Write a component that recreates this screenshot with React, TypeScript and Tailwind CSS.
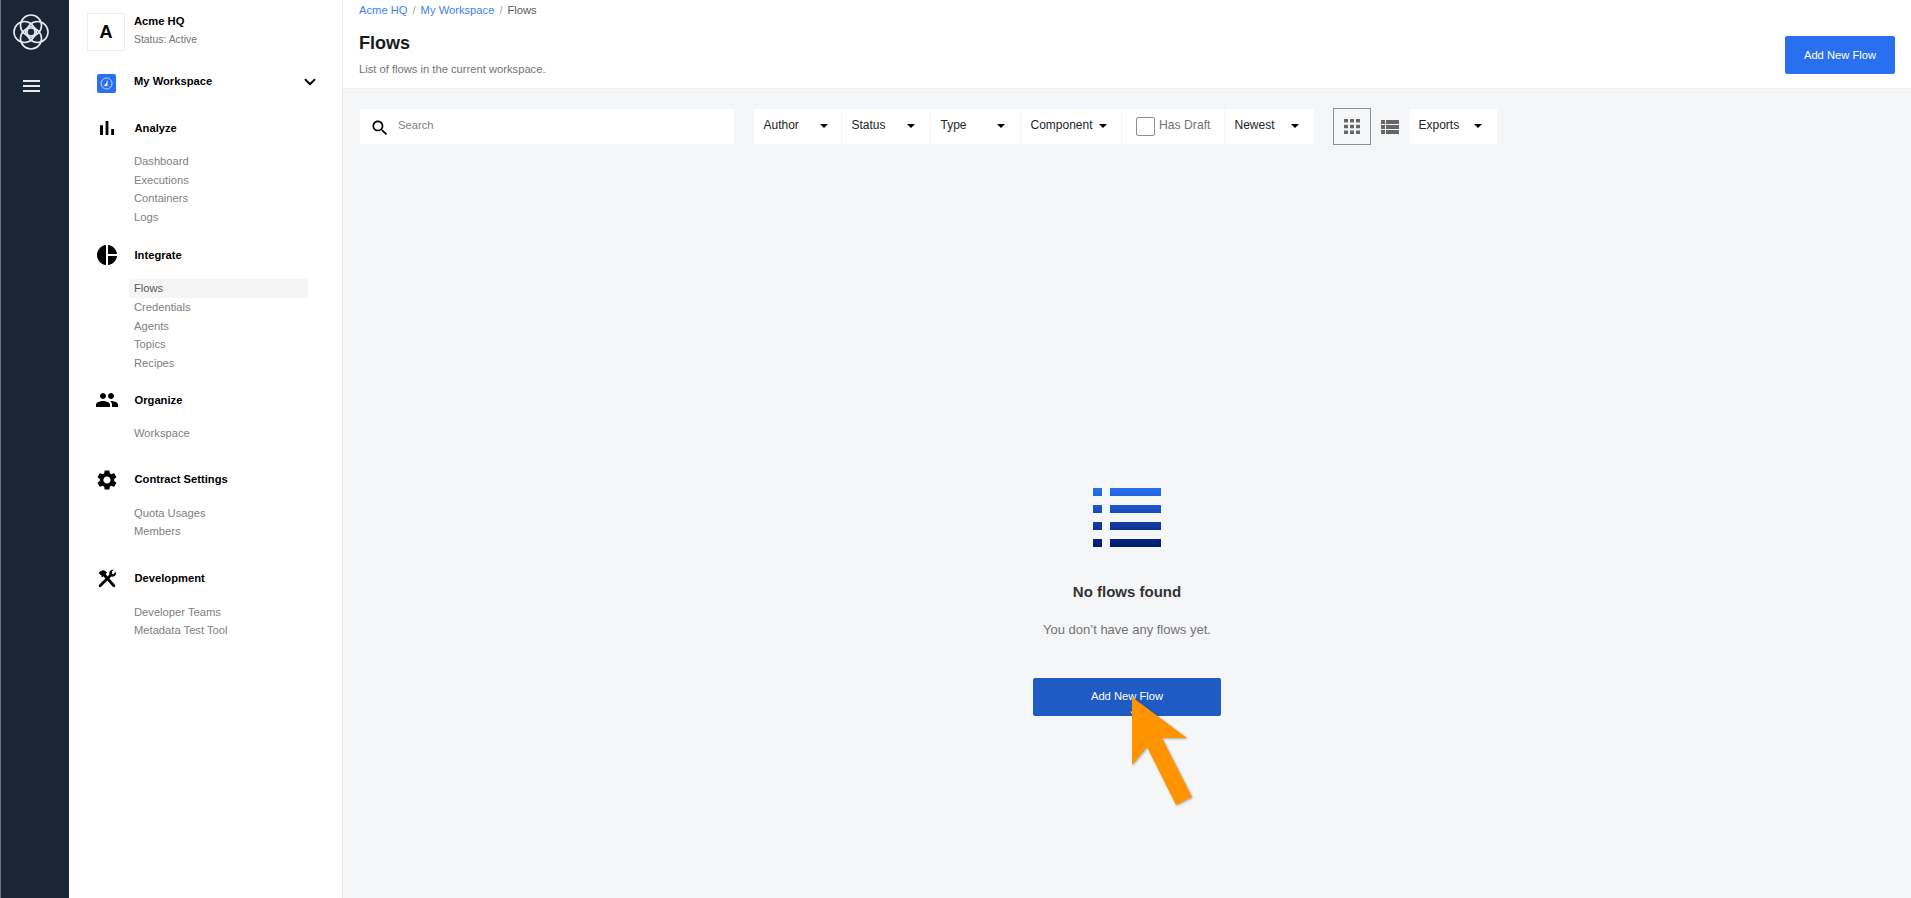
import { ChevronDown } from 'lucide-react';

const navGroups = [
    { title: "Analyze", icon: "analyze", items: ["Dashboard", "Executions", "Containers", "Logs"], mt: "mt-[28px]" },
    { title: "Integrate", icon: "integrate", items: ["Flows", "Credentials", "Agents", "Topics", "Recipes"], mt: "mt-[21.6px]" },
    { title: "Organize", icon: "organize", items: ["Workspace"], mt: "mt-[20.6px]" },
    { title: "Contract Settings", icon: "settings", items: ["Quota Usages", "Members"], mt: "mt-[29.6px]" },
    { title: "Development", icon: "tools", items: ["Developer Teams", "Metadata Test Tool"], mt: "mt-[30.6px]" },
];

function NavIcon({ name }: { name: string }) {
    if (name === "analyze") {
        return (
            <svg className="w-6 h-6" viewBox="0 0 24 24" fill="#000">
                <path d="M5 9.2h3V19H5zM10.6 5h2.8v14h-2.8zM16.2 13H19v6h-2.8z" />
            </svg>
        );
    }
    if (name === "integrate") {
        return (
            <svg className="w-6 h-6" viewBox="0 0 24 24" fill="#000">
                <path d="M11 2v20c-5.07-.5-9-4.79-9-10s3.93-9.5 9-10zm2.03 0v8.99H22c-.47-4.74-4.24-8.52-8.97-8.99zm0 11.01V22c4.74-.47 8.5-4.25 8.97-8.99h-8.97z" />
            </svg>
        );
    }
    if (name === "organize") {
        return (
            <svg className="w-6 h-6" viewBox="0 0 24 24" fill="#000">
                <path d="M16 11c1.66 0 2.99-1.34 2.99-3S17.66 5 16 5c-1.66 0-3 1.34-3 3s1.34 3 3 3zm-8 0c1.66 0 2.99-1.34 2.99-3S9.66 5 8 5C6.34 5 5 6.34 5 8s1.34 3 3 3zm0 2c-2.33 0-7 1.17-7 3.5V19h14v-2.5c0-2.33-4.67-3.5-7-3.5zm8 0c-.29 0-.62.02-.97.05 1.16.84 1.97 1.97 1.97 3.45V19h6v-2.5c0-2.33-4.67-3.5-7-3.5z" />
            </svg>
        );
    }
    if (name === "settings") {
        return (
            <svg className="w-6 h-6" viewBox="0 0 24 24" fill="#000">
                <path d="M19.14 12.94c.04-.3.06-.61.06-.94 0-.32-.02-.64-.07-.94l2.03-1.58c.18-.14.23-.41.12-.61l-1.92-3.32c-.12-.22-.37-.29-.59-.22l-2.39.96c-.5-.38-1.03-.7-1.62-.94l-.36-2.54c-.04-.24-.24-.41-.48-.41h-3.84c-.24 0-.43.17-.47.41l-.36 2.54c-.59.24-1.13.57-1.62.94l-2.39-.96c-.22-.08-.47 0-.59.22L2.74 8.87c-.12.21-.08.47.12.61l2.03 1.58c-.05.3-.09.63-.09.94s.02.64.07.94l-2.03 1.58c-.18.14-.23.41-.12.61l1.92 3.32c.12.22.37.29.59.22l2.39-.96c.5.38 1.03.7 1.62.94l.36 2.54c.05.24.24.41.48.41h3.84c.24 0 .44-.17.47-.41l.36-2.54c.59-.24 1.13-.56 1.62-.94l2.39.96c.22.08.47 0 .59-.22l1.92-3.32c.12-.22.07-.47-.12-.61l-2.01-1.58zM12 15.6c-1.98 0-3.6-1.62-3.6-3.6s1.62-3.6 3.6-3.6 3.6 1.62 3.6 3.6-1.62 3.6-3.6 3.6z" />
            </svg>
        );
    }
    return (
        <svg className="w-[22px] h-[22px]" viewBox="0 0 24 24" fill="#000">
            <path d="M3.2 4.6 L7 2.5 C9 2.3 10.8 3.4 12 5 L10.4 6.6 L20.6 18.4 C21.2 19.1 21.1 19.9 20.5 20.5 C19.9 21.1 19 21.1 18.4 20.5 L8 9 L6.4 10.4 L5.8 7.9 L4 7.2 Z" />
            <path d="M21.6 4.2 L19 6.8 L17.3 5.9 L17.5 3.6 L19.6 2 C17.4 1.3 15 2.6 14.5 4.8 C14.3 5.6 14.4 6.4 14.7 7.1 L3.4 18.3 C2.8 18.9 2.8 19.9 3.4 20.5 C4 21.1 5 21.1 5.6 20.5 L16.7 9.3 C17.5 9.6 18.4 9.6 19.2 9.4 C21.4 8.8 22.5 6.4 21.6 4.2 Z" />
        </svg>
    );
}

function Caret() {
    return <span className="w-0 h-0 mt-[2px] border-x-[4px] border-x-transparent border-t-[4px] border-t-black" />;
}

function FilterButton({ label, className }: { label: string; className: string }) {
    return (
        <div className={`h-[35px] bg-white flex items-center justify-between pl-[9.5px] pb-[3px] text-[12px] text-[#212529] ${className}`}>
            <span>{label}</span>
            <Caret />
        </div>
    );
}

function Logo() {
    return (
        <svg className="w-[36px] h-[36px]" viewBox="0 0 36 36" fill="none" stroke="#e6e9ee" strokeWidth="1.6">
            <circle cx="18" cy="18" r="5.5" />
            <circle cx="18" cy="11.5" r="10.5" />
            <circle cx="18" cy="24.5" r="10.5" />
            <circle cx="11.5" cy="18" r="10.5" />
            <circle cx="24.5" cy="18" r="10.5" />
        </svg>
    );
}

export default function App() {
    return (
        <div className="flex h-[898px] w-full overflow-hidden bg-white font-['Liberation_Sans',Arial,sans-serif]">
            {/* Dark rail */}
            <div className="w-[69px] shrink-0 bg-[#1a2535] border-l border-l-[#6b7280] flex flex-col items-center pt-[14px] pr-[8px]">
                <Logo />
                <div className="mt-[30px] w-[17px] flex flex-col gap-[3px]">
                    <span className="h-[2px] bg-[#e6e9ee]" />
                    <span className="h-[2px] bg-[#e6e9ee]" />
                    <span className="h-[2px] bg-[#e6e9ee]" />
                </div>
            </div>

            {/* Sidebar */}
            <aside className="w-[274px] shrink-0 bg-white border-r border-r-[#e9ebee] pl-[18px] pt-[13px]">
                <div className="flex">
                    <div className="w-[38px] h-[38px] border border-[#eceef0] flex items-center justify-center text-[18px] font-bold text-black">A</div>
                    <div className="ml-[9px] pt-[1px]">
                        <div className="text-[11.2px] leading-[14px] font-bold text-black">Acme HQ</div>
                        <div className="mt-[5px] text-[10.4px] leading-[14px] text-[#737373]">Status: Active</div>
                    </div>
                </div>

                <div className="mt-[23px] flex items-start">
                    <div className="ml-[10px] w-[19px] h-[19px] rounded-[2px] bg-[#2970f0] flex items-center justify-center">
                        <svg className="w-[13px] h-[13px]" viewBox="0 0 13 13" fill="none">
                            <circle cx="6.5" cy="6.5" r="5.5" stroke="#c9dbfb" strokeWidth="1" />
                            <path fill="#fff" d="M7.5 3 V8.5 A2.5 2.5 0 0 1 3.5 8 C4.5 8 5.5 7.5 6 6.5 C6.5 5.5 6.8 4 7.5 3 Z" />
                        </svg>
                    </div>
                    <div className="ml-[18px] w-[167px] text-[11.2px] leading-[14px] font-bold text-black">My Workspace</div>
                    <ChevronDown className="w-[18px] h-[18px] mt-[-1px] text-black" strokeWidth={2.5} />
                </div>

                <nav>
                    {navGroups.map((group) => (
                        <div key={group.title} className={group.mt}>
                            <div className="flex items-center h-[14px]">
                                <div className="w-[39px] flex justify-center">
                                    <NavIcon name={group.icon} />
                                </div>
                                <span className="ml-[8.5px] text-[11.2px] font-bold text-black">{group.title}</span>
                            </div>
                            <ul className="mt-[17px] ml-[42px] w-[179px]">
                                {group.items.map((item) => (
                                    <li
                                        key={item}
                                        className={`h-[18.7px] pl-[5px] flex items-center text-[11.2px] ${item === "Flows" ? "bg-[#f5f5f5] text-[#595959]" : "text-[#808080]"}`}
                                    >
                                        {item}
                                    </li>
                                ))}
                            </ul>
                        </div>
                    ))}
                </nav>
            </aside>

            {/* Main */}
            <main className="relative flex-1 flex flex-col bg-[#f5f6f8]">
                <header className="h-[89px] shrink-0 bg-white border-b border-b-[#eceef0] pl-[17px] pr-[16px] flex justify-between">
                    <div className="-ml-[1px]">
                        <div className="pt-[3px] flex gap-[5px] text-[11.2px] leading-[14px]">
                            <span className="text-[#3f7ff0]">Acme HQ</span>
                            <span className="text-[#a0a4a8]">/</span>
                            <span className="text-[#3f7ff0]">My Workspace</span>
                            <span className="text-[#a0a4a8]">/</span>
                            <span className="text-[#595959]">Flows</span>
                        </div>
                        <h1 className="mt-[14px] text-[18px] leading-[24px] font-bold text-[#1a1a1a]">Flows</h1>
                        <p className="mt-[7px] text-[11.2px] leading-[14px] text-[#737373]">List of flows in the current workspace.</p>
                    </div>
                    <button className="mt-[36px] w-[110px] h-[38px] rounded-[2px] bg-[#2970f0] text-[11.2px] text-white">Add New Flow</button>
                </header>

                {/* Filter bar */}
                <div className="mt-[19px] pl-[17px] flex items-center h-[37px]">
                    <div className="w-[374px] h-[35px] bg-white flex items-center pl-[10px]">
                        <svg className="w-[20px] h-[20px] mt-[3px]" viewBox="0 0 24 24" fill="#000">
                            <path d="M15.5 14h-.79l-.28-.27C15.41 12.59 16 11.11 16 9.5 16 5.91 13.09 3 9.5 3S3 5.91 3 9.5 5.91 16 9.5 16c1.61 0 3.09-.59 4.23-1.57l.27.28v.79l5 4.99L20.49 19l-4.99-5zm-6 0C7.01 14 5 11.99 5 9.5S7.01 5 9.5 5 14 7.01 14 9.5 11.99 14 9.5 14z" />
                        </svg>
                        <span className="ml-[8px] -mt-[2px] text-[11.2px] text-[#808080]">Search</span>
                    </div>
                    <div className="ml-[20px] flex gap-[1px]">
                        <FilterButton label="Author" className="w-[87px] pr-[13px]" />
                        <FilterButton label="Status" className="w-[88px] pr-[15px]" />
                        <FilterButton label="Type" className="w-[89px] pr-[15px]" />
                        <FilterButton label="Component" className="w-[100px] pr-[14px]" />
                        <div className="w-[102px] h-[35px] bg-white flex items-center pl-[14px]">
                            <span className="w-[19px] h-[19px] rounded-[2px] border border-[#8a8f98] bg-white" />
                            <span className="ml-[4px] pb-[3px] text-[12.2px] text-[#737373]">Has Draft</span>
                        </div>
                        <FilterButton label="Newest" className="w-[89px] pr-[15px]" />
                    </div>
                    <div className="ml-[19px] w-[38px] h-[37px] border border-[#8a8f98] flex items-center justify-center">
                        <svg className="w-[16px] h-[15px]" viewBox="0 0 16 15" fill="#666">
                            <path d="M0 0h4v3.5H0zM6 0h4v3.5H6zM12 0h4v3.5h-4zM0 5.7h4v3.6H0zM6 5.7h4v3.6H6zM12 5.7h4v3.6h-4zM0 11.5h4V15H0zM6 11.5h4V15H6zM12 11.5h4V15h-4z" />
                        </svg>
                    </div>
                    <svg className="ml-[10px] w-[18px] h-[14px]" viewBox="0 0 18 14" fill="#666">
                        <path d="M0 0h4v4H0zM5 0h13v4H5zM0 5h4v4H0zM5 5h13v4H5zM0 10h4v4H0zM5 10h13v4H5z" />
                    </svg>
                    <FilterButton label="Exports" className="ml-[10px] w-[88px] pr-[15px]" />
                </div>

                {/* Empty state */}
                <div className="mt-[343px] flex flex-col items-center">
                    <svg className="w-[68px] h-[60px]" viewBox="0 0 68 60">
                        <defs>
                            <linearGradient id="flowsIcon" x1="0" y1="0" x2="0" y2="1">
                                <stop offset="0" stopColor="#2a6ff0" />
                                <stop offset="1" stopColor="#021a70" />
                            </linearGradient>
                        </defs>
                        <path fill="url(#flowsIcon)" d="M0 0h9v8H0zM17 0h51v8H17zM0 17h9v8H0zM17 17h51v8H17zM0 34h9v8H0zM17 34h51v8H17zM0 51h9v8H0zM17 51h51v8H17z" />
                    </svg>
                    <h2 className="mt-[35px] text-[15px] leading-[18px] font-bold text-[#333333]">No flows found</h2>
                    <p className="mt-[20px] text-[13px] leading-[18px] text-[#737373]">You don&rsquo;t have any flows yet.</p>
                    <button className="mt-[39px] w-[188px] h-[38px] rounded-[2px] bg-[#1f5bc4] text-[11.2px] text-white pb-[2px]">Add New Flow</button>
                </div>

                {/* Page cursor under the arrow */}
                <svg className="absolute left-[785px] top-[708px] w-[10px] h-[10px]" viewBox="0 0 10 10" fill="#d8d8d8" stroke="#444" strokeWidth="1">
                    <path d="M1 3 L5 8 L9 8 L9 3 Z" />
                </svg>

                {/* Tutorial arrow */}
                <svg className="absolute left-[785px] top-[690px] w-[70px] h-[125px] drop-shadow-[1px_1px_1px_rgba(0,0,0,0.3)]" viewBox="0 0 70 125" fill="#ff9400">
                    <path d="M4 7 L59 48 L34 48 L64 107 L48 115 L19 57 L4 75 Z" />
                </svg>
            </main>
        </div>
    );
}
